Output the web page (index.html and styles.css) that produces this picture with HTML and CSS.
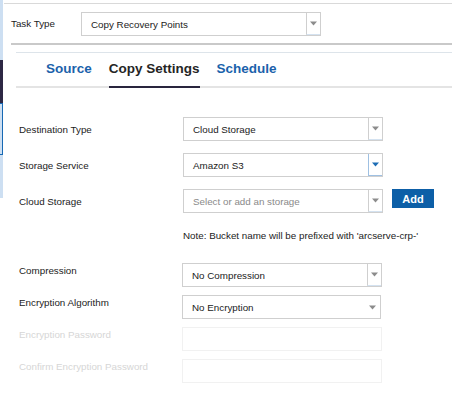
FILE: index.html
```html
<!DOCTYPE html>
<html>
<head>
<meta charset="utf-8">
<link rel="stylesheet" href="styles.css">
</head>
<body>
<div class="app">
  <div class="rail">
    <div class="rail-seg rail-light rail-top"></div>
    <div class="rail-seg rail-dark"></div>
    <div class="rail-seg rail-sel"></div>
    <div class="rail-seg rail-light rail-bottom"></div>
  </div>
  <div class="main">
    <div class="task-row">
      <span class="task-label">Task Type</span>
      <div class="select task-select">
        <span class="select-text">Copy Recovery Points</span>
        <span class="arrow-box"><svg width="7" height="5" viewBox="0 0 7 5"><path d="M0 0.5h7L3.5 4.5z" fill="#8c8c8c"/></svg></span>
      </div>
    </div>
    <div class="rule-thick"></div>
    <div class="panel">
      <div class="tabs">
        <span class="tab">Source</span>
        <span class="tab tab-active">Copy Settings</span>
        <span class="tab">Schedule</span>
      </div>
      <div class="form">
        <div class="grid-top">
          <span class="label">Destination Type</span>
          <div class="select">
            <span class="select-text">Cloud Storage</span>
            <span class="arrow-box"><svg width="7" height="5" viewBox="0 0 7 5"><path d="M0 0.5h7L3.5 4.5z" fill="#8c8c8c"/></svg></span>
          </div>
          <span class="label">Storage Service</span>
          <div class="select">
            <span class="select-text">Amazon S3</span>
            <span class="arrow-box arrow-focus"><svg width="7" height="5" viewBox="0 0 7 5"><path d="M0 0.5h7L3.5 4.5z" fill="#1c6db5"/></svg></span>
          </div>
          <span class="label">Cloud Storage</span>
          <div class="with-btn">
            <div class="select">
              <span class="select-text placeholder">Select or add an storage</span>
              <span class="arrow-box"><svg width="7" height="5" viewBox="0 0 7 5"><path d="M0 0.5h7L3.5 4.5z" fill="#8c8c8c"/></svg></span>
            </div>
            <button class="btn-add">Add</button>
          </div>
        </div>
        <p class="note">Note: Bucket name will be prefixed with 'arcserve-crp-'</p>
        <div class="grid-bottom">
          <span class="label">Compression</span>
          <div class="select">
            <span class="select-text">No Compression</span>
            <span class="arrow-box"><svg width="7" height="5" viewBox="0 0 7 5"><path d="M0 0.5h7L3.5 4.5z" fill="#8c8c8c"/></svg></span>
          </div>
          <span class="label">Encryption Algorithm</span>
          <div class="select select-plain">
            <span class="select-text">No Encryption</span>
            <span class="arrow-plain"><svg width="7" height="5" viewBox="0 0 7 5"><path d="M0 0.5h7L3.5 4.5z" fill="#8c8c8c"/></svg></span>
          </div>
          <span class="label label-disabled">Encryption Password</span>
          <div class="input-disabled"></div>
          <span class="label label-disabled">Confirm Encryption Password</span>
          <div class="input-disabled"></div>
        </div>
      </div>
    </div>
  </div>
</div>
</body>
</html>
```
FILE: styles.css
```css
* { box-sizing: border-box; }
html, body {
  margin: 0;
  padding: 0;
  background: #fff;
}
body {
  font-family: "Liberation Sans", Arial, sans-serif;
  font-size: 9.8px;
  color: #222;
}
.app {
  display: flex;
  width: 452px;
  height: 411px;
  overflow: hidden;
}
.rail {
  width: 3px;
  display: flex;
  flex-direction: column;
  flex: none;
}
.rail-light { background: #cddff2; }
.rail-top { height: 60px; }
.rail-dark { height: 43px; background: #2d2744; }
.rail-sel {
  height: 52px;
  background: #cddff2;
  border-top: 1px solid #1769b4;
  border-bottom: 1px solid #1769b4;
  border-right: 1px solid #1769b4;
}
.rail-bottom { height: 43px; }
.main {
  flex: 1;
  margin-left: 1px;
  margin-top: 3px;
  border-top: 1px solid #d9d9d9;
  display: flex;
  flex-direction: column;
}
.task-row {
  display: flex;
  align-items: center;
  padding: 8px 0 0 7px;
  height: 32px;
}
.task-label {
  width: 70px;
  margin-top: -2px;
}
.select {
  width: 200px;
  height: 24px;
  border: 1px solid #cfcfcf;
  display: flex;
  align-items: center;
  background: #fff;
}
.task-select {
  width: 240px;
}
.select-text {
  flex: 1;
  padding-left: 9px;
  color: #222;
  white-space: nowrap;
}
.placeholder { color: #8a8a8a; }
.arrow-box {
  width: 14px;
  height: 100%;
  border-left: 1px solid #cfcfcf;
  border-bottom: 1px solid #d4e2f0;
  display: flex;
  align-items: center;
  justify-content: center;
}
.arrow-focus {
  border-left-color: #9fc0e2;
  border-bottom-color: #9fc0e2;
}
.arrow-plain {
  width: 16px;
  display: flex;
  align-items: center;
  justify-content: center;
}
.rule-thick {
  height: 2px;
  background: #c9c9c9;
  margin: 7px 0 0 7px;
}
.panel {
  margin: 7px 0 0 12px;
  border-top: 1px solid #dde4ea;
}
.tabs {
  display: flex;
  gap: 17px;
  padding-left: 30px;
  height: 35px;
  border-bottom: 2px solid #e4e4e4;
}
.tab {
  font-size: 13.5px;
  font-weight: bold;
  color: #1b62ab;
  line-height: 29px;
  padding-top: 1px;
  height: 35px;
}
.tab-active {
  color: #252525;
  border-bottom: 2px solid #29253d;
  height: 35px;
  margin-bottom: -2px;
}
.form {
  padding: 29px 0 0 3px;
}
.grid-top {
  display: grid;
  grid-template-columns: 164px auto;
  row-gap: 12px;
  align-items: center;
}
.with-btn {
  display: flex;
  align-items: flex-start;
  gap: 9px;
}
.btn-add {
  width: 42px;
  height: 19px;
  border: none;
  background: #0d5fa7;
  color: #fff;
  font-family: "Liberation Sans", Arial, sans-serif;
  font-size: 11px;
  font-weight: bold;
  padding: 0;
}
.note {
  margin: 17px 0 21px 164px;
  line-height: 12px;
  white-space: nowrap;
}
.grid-bottom {
  display: grid;
  grid-template-columns: 163px auto;
  row-gap: 8px;
  align-items: start;
}
.grid-bottom .label {
  padding-top: 2px;
}
.select-plain {
  width: 199px;
}
.label-disabled {
  color: #d6d6d6;
}
.input-disabled {
  width: 200px;
  height: 24px;
  border: 1px solid #f1f1f1;
}
```
